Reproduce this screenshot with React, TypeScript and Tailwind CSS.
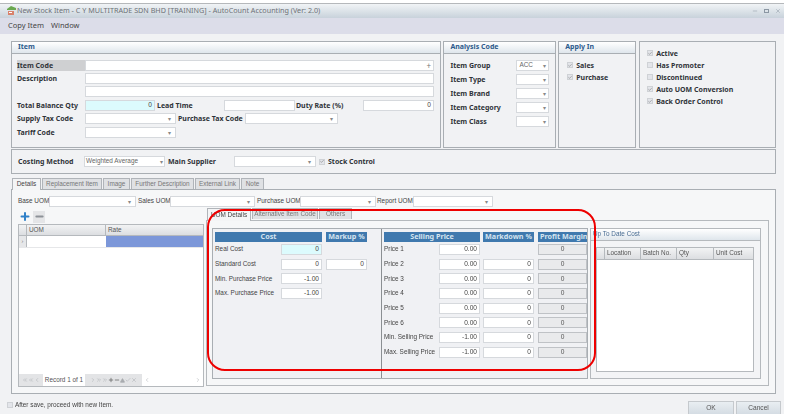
import { ChevronLeft, ChevronRight, ChevronsLeft, ChevronsRight, Check, X, Minus, Plus, Triangle } from 'lucide-react';

const font = { fontFamily: '"Noto Sans", "DejaVu Sans", sans-serif' };
const thin = { fontFamily: '"Liberation Sans", Arial, sans-serif' };

function Field({ w, value, arrow, tint }: { w: number; value?: string; arrow?: boolean; tint?: boolean }) {
  return (
    <div
      style={{ width: w, ...thin }}
      className={`h-[11px] shrink-0 flex items-center justify-end px-[2px] border border-[#d6d9dd] text-[6.6px] leading-none text-[#444] ${tint ? 'bg-[#dcfbfd]' : 'bg-white'}`}
    >
      {value && <span>{value}</span>}
      {arrow && <span className="text-[#888] text-[6px] pr-[2px]">▾</span>}
    </div>
  );
}

function Label({ children, w }: { children: string; w?: number }) {
  return (
    <div style={w ? { width: w } : undefined} className="shrink-0 text-[7px] leading-none font-bold text-[#2f3338] whitespace-nowrap">
      {children}
    </div>
  );
}

function Small({ children, w }: { children: string; w?: number }) {
  return (
    <div style={w ? { width: w, ...thin } : thin} className="shrink-0 text-[6.4px] leading-none text-[#444] whitespace-nowrap">
      {children}
    </div>
  );
}

function Check2({ on, label }: { on?: boolean; label: string }) {
  return (
    <div className="flex items-center gap-[3px] h-[12px]">
      <div className="w-[6px] h-[6px] bg-[#e3e5ea] border border-[#cfd2d6] flex items-center justify-center">
        {on && <Check size={5} strokeWidth={3} className="text-[#666]" />}
      </div>
      <Label>{label}</Label>
    </div>
  );
}

function PanelHead({ children }: { children: string }) {
  return (
    <div className="h-[12px] px-[6px] flex items-center border-b border-[#a9aeb3] bg-gradient-to-b from-white to-[#dfe6ec] text-[7px] font-bold text-[#2c5a8c]">
      {children}
    </div>
  );
}

function Blue({ w, children, left }: { w: number; children: string; left?: boolean }) {
  return (
    <div style={{ width: w }} className={`h-[10px] shrink-0 bg-[#4079ae] flex items-center text-[7.2px] leading-none font-bold text-[#d5e4f0] overflow-hidden whitespace-nowrap ${left ? 'pl-[2px]' : 'justify-center'}`}>
      {children}
    </div>
  );
}

function Tab({ w, label, active, h = 11 }: { w: number; label: string; active?: boolean; h?: number }) {
  return (
    <div
      style={{ width: w, height: h, ...thin }}
      className={`shrink-0 flex items-center justify-center border border-b-0 border-[#b0b4b9] text-[6.4px] leading-none whitespace-nowrap ${active ? 'bg-[#f4f5f6] text-[#444]' : 'bg-[#dfe1e4] text-[#777]'}`}
    >
      {label}
    </div>
  );
}

const analysis = ['Item Group', 'Item Type', 'Item Brand', 'Item Category', 'Item Class'];
const prices = [
  ['Price 1', '0.00'],
  ['Price 2', '0.00'],
  ['Price 3', '0.00'],
  ['Price 4', '0.00'],
  ['Price 5', '0.00'],
  ['Price 6', '0.00'],
  ['Min. Selling Price', '-1.00'],
  ['Max. Selling Price', '-1.00'],
];

export default function App() {
  return (
    <div style={font} className="relative w-[787px] h-[414px] overflow-hidden bg-white">
      <div className="w-[784px] h-[414px] flex flex-col bg-[#f1f2f4] blur-[0.3px]">
        <div className="h-[4px] shrink-0 bg-white border-b border-[#b5b8bb]" />
        <div className="h-[14px] shrink-0 flex items-center pl-[7px] pr-[3px] bg-gradient-to-b from-[#f1f4f6] to-[#c8d2db]">
          <svg width="9" height="10" viewBox="0 0 9 10" className="shrink-0">
            <path d="M0 3 L4 0 L9 2 L9 4 L0 4 Z" fill="#6aa84f" />
            <rect x="1" y="5" width="6" height="4" fill="#d9826b" />
            <rect x="2" y="6" width="3" height="1" fill="#fff" />
          </svg>
          <span className="ml-[1px] text-[7.2px] leading-none text-[#6d7176] whitespace-nowrap">
            New Stock Item - C Y MULTITRADE SDN BHD [TRAINING] - AutoCount Accounting (Ver: 2.0)
          </span>
          <div className="ml-auto flex items-center gap-[6px] text-[#8b97a3]">
            <Minus size={6} />
            <div className="w-[5px] h-[4px] border border-[#8b97a3]" />
            <X size={6} />
          </div>
        </div>
        <div className="h-[16px] shrink-0 flex items-center gap-[7px] pl-[8px] bg-[#dcdde9] text-[7.5px] leading-none text-[#444]">
          <span>Copy Item</span>
          <span>Window</span>
        </div>

        <div className="pl-[11px] pt-[7px] flex flex-col w-[776px]">
          <div className="flex h-[107px] gap-[2px]">
            <div className="w-[431px] border border-[#a9aeb3]">
              <PanelHead>Item</PanelHead>
              <div className="pl-[5px] pt-[6px] flex flex-col gap-[2px]">
                <div className="flex items-center">
                  <div className="w-[68px] h-[11px] flex items-center bg-[#cfd0d2]">
                    <Label>Item Code</Label>
                  </div>
                  <div className="w-[349px] h-[11px] flex items-center justify-end pr-[2px] bg-white border border-[#d6d9dd] text-[8px] text-[#777]">+</div>
                </div>
                <div className="flex items-center">
                  <Label w={68}>Description</Label>
                  <Field w={349} />
                </div>
                <div className="flex items-center pl-[68px]">
                  <Field w={349} />
                </div>
                <div className="flex items-center mt-[1px]">
                  <Label w={68}>Total Balance Qty</Label>
                  <Field w={70} value="0" tint />
                  <div className="pl-[2px] w-[69px]"><Label>Lead Time</Label></div>
                  <Field w={71} />
                  <div className="pl-[1px] w-[68px]"><Label>Duty Rate (%)</Label></div>
                  <Field w={71} value="0" />
                </div>
                <div className="flex items-center">
                  <Label w={68}>Supply Tax Code</Label>
                  <Field w={91} arrow />
                  <div className="pl-[2px] w-[69px]"><Label>Purchase Tax Code</Label></div>
                  <Field w={93} arrow />
                </div>
                <div className="flex items-center mt-[1px]">
                  <Label w={68}>Tariff Code</Label>
                  <Field w={91} arrow />
                </div>
              </div>
            </div>

            <div className="w-[113px] border border-[#a9aeb3]">
              <PanelHead>Analysis Code</PanelHead>
              <div className="pl-[6px] pt-[6px] flex flex-col gap-[3px]">
                {analysis.map((name, i) => (
                  <div key={name} className="flex items-center">
                    <Label w={66}>{name}</Label>
                    <div style={thin} className="w-[33px] h-[11px] flex items-center justify-between px-[2px] bg-white border border-[#d6d9dd] text-[6.4px] leading-none text-[#666]">
                      <span>{i === 0 ? 'ACC' : ''}</span>
                      <span className="text-[6px] text-[#888]">▾</span>
                    </div>
                  </div>
                ))}
              </div>
            </div>

            <div className="w-[78px] border border-[#a9aeb3]">
              <PanelHead>Apply In</PanelHead>
              <div className="pl-[8px] pt-[5px] flex flex-col">
                <Check2 on label="Sales" />
                <Check2 on label="Purchase" />
              </div>
            </div>

            <div className="w-[137px] ml-[1px] border border-[#a9aeb3] pl-[7px] pt-[5px] flex flex-col">
              <Check2 on label="Active" />
              <Check2 label="Has Promoter" />
              <Check2 label="Discontinued" />
              <Check2 on label="Auto UOM Conversion" />
              <Check2 on label="Back Order Control" />
            </div>
          </div>

          <div className="mt-[1px] h-[25px] w-[765px] flex items-center pl-[6px] border border-[#a9aeb3]">
            <Label w={66}>Costing Method</Label>
            <div style={thin} className="w-[81px] h-[11px] flex items-center justify-between px-[1px] bg-white border border-[#d6d9dd] text-[6.4px] leading-none text-[#666]">
              <span>Weighted Average</span>
              <span className="text-[6px] text-[#888]">▾</span>
            </div>
            <div className="pl-[3px] w-[69px]"><Label>Main Supplier</Label></div>
            <Field w={82} arrow />
            <div className="ml-[3px]"><Check2 on label="Stock Control" /></div>
          </div>

          <div className="mt-[4px] flex pl-[1px] h-[11px] gap-[1px] relative z-10">
            <Tab w={29} h={12} label="Details" active />
            <Tab w={60} label="Replacement Item" />
            <Tab w={27} label="Image" />
            <Tab w={63} label="Further Description" />
            <Tab w={45} label="External Link" />
            <Tab w={23} label="Note" />
          </div>

          <div className="h-[205px] w-[765px] flex flex-col bg-[#f6f7f8] border border-[#a9aeb3] pl-[6px] pt-[6px]">
            <div className="flex items-center h-[11px]">
              <Small w={31}>Base UOM</Small>
              <Field w={87} arrow />
              <div className="pl-[2px] w-[34px]"><Small>Sales UOM</Small></div>
              <Field w={85} arrow />
              <div className="pl-[2px] w-[45px]"><Small>Purchase UOM</Small></div>
              <Field w={76} arrow />
              <div className="pl-[1px] w-[37px]"><Small>Report UOM</Small></div>
              <Field w={80} arrow />
            </div>

            <div className="flex mt-[2px]">
              <div className="w-[186px] flex flex-col">
                <div className="flex items-center gap-[2px] h-[15px] pl-[1px]">
                  <div className="w-[12px] h-[12px] flex items-center justify-center">
                    <Plus size={13} strokeWidth={4} className="text-[#2f80c8]" />
                  </div>
                  <div className="w-[12px] h-[12px] flex items-center justify-center bg-[#e4e5e7]">
                    <Minus size={11} strokeWidth={4} className="text-[#8d9298]" />
                  </div>
                </div>
                <div className="h-[163px] flex flex-col bg-white border border-[#b5b9bd]">
                  <div style={thin} className="h-[11px] flex bg-gradient-to-b from-[#f2f3f4] to-[#dcdee1] border-b border-[#b5b9bd] text-[6.4px] leading-none text-[#555]">
                    <div className="w-[8px] border-r border-[#b5b9bd]" />
                    <div className="w-[79px] flex items-center pl-[2px] border-r border-[#b5b9bd]">UOM</div>
                    <div className="flex-1 flex items-center pl-[2px]">Rate</div>
                  </div>
                  <div className="h-[12px] flex border-b border-[#e6e7e9]">
                    <div className="w-[8px] flex items-center justify-center bg-[#e6e7e9] border-r border-[#b5b9bd] text-[6px] text-[#777]">›</div>
                    <div className="w-[79px]" />
                    <div className="flex-1 bg-[#7c97d9]" />
                  </div>
                  <div className="mt-auto h-[12px] flex items-center text-[#a9acb0]">
                    <div className="flex items-center h-full w-[24px] justify-center bg-[#e3e4e6]">
                      <ChevronsLeft size={6} />
                      <ChevronsLeft size={6} />
                      <ChevronLeft size={6} />
                    </div>
                    <span style={thin} className="w-[42px] text-center text-[6.4px] leading-none text-[#555] whitespace-nowrap">Record 1 of 1</span>
                    <div className="flex items-center h-full w-[57px] justify-center bg-[#e3e4e6]">
                      <ChevronRight size={6} />
                      <ChevronsRight size={6} />
                      <ChevronsRight size={6} />
                      <Plus size={6} strokeWidth={3} className="text-[#666]" />
                      <Minus size={6} strokeWidth={3} className="text-[#666]" />
                      <Triangle size={5} fill="currentColor" />
                      <Check size={6} />
                      <X size={6} />
                    </div>
                    <ChevronLeft size={6} className="ml-[2px]" />
                    <ChevronRight size={6} className="ml-auto mr-[2px]" />
                  </div>
                </div>
              </div>

              <div className="ml-[2px] -mt-[1px] flex flex-col w-[563px]">
                <div className="flex h-[12px] gap-[1px] relative z-10 pl-[1px]">
                  <Tab w={44} h={13} label="UOM Details" active />
                  <Tab w={66} label="Alternative Item Code" />
                  <Tab w={33} label="Others" />
                </div>
                <div className="h-[166px] flex gap-[2px] border border-[#b5b9bd] pl-[5px] pt-[7px] bg-[#f6f7f8]">
                  <div className="w-[376px] h-[151px] flex border border-[#a9aeb3] bg-[#f0f1f4]">
                    <div className="w-[169px] border-r border-[#8b8f93] pl-[2px] pt-[3px]">
                      <div className="flex gap-[4px]">
                        <Blue w={107}>Cost</Blue>
                        <Blue w={41}>Markup %</Blue>
                      </div>
                      <div className="grid grid-cols-[66px_41px_41px] gap-x-0 gap-y-[3.7px] mt-[2px] items-center">
                        <Small>Real Cost</Small>
                        <Field w={41} value="0" tint />
                        <div />
                        <Small>Standard Cost</Small>
                        <Field w={41} value="0" />
                        <div className="ml-[4px]"><Field w={41} value="0" /></div>
                        <Small>Min. Purchase Price</Small>
                        <Field w={41} value="-1.00" />
                        <div />
                        <Small>Max. Purchase Price</Small>
                        <Field w={41} value="-1.00" />
                        <div />
                      </div>
                    </div>
                    <div className="flex-1 pl-[2px] pt-[3px]">
                      <div className="flex">
                        <Blue w={96}>Selling Price</Blue>
                        <div className="ml-[3px]"><Blue w={51}>Markdown %</Blue></div>
                        <div className="ml-[4px]"><Blue w={49} left>Profit Margin %</Blue></div>
                      </div>
                      <div className="flex flex-col gap-[3.7px] mt-[2px]">
                        {prices.map(([name, value], i) => (
                          <div key={name} className="flex items-center">
                            <Small w={55}>{name}</Small>
                            <Field w={41} value={value} />
                            <div className="ml-[3px] w-[51px]">
                              {i > 0 && <Field w={51} value="0" />}
                            </div>
                            <div style={thin} className="ml-[4px] w-[49px] h-[11px] flex items-center justify-center bg-[#e9eaec] border border-[#bfc2c6] text-[6.6px] leading-none text-[#555]">0</div>
                          </div>
                        ))}
                      </div>
                    </div>
                  </div>

                  <div className="w-[171px] h-[151px] border border-[#b5b9bd] bg-[#f3f4f6]">
                    <div style={thin} className="h-[12px] flex items-center pl-[2px] border-b border-[#b5b9bd] bg-gradient-to-b from-white to-[#dfe6ec] text-[6.4px] leading-none text-[#4a6d93]">
                      Up To Date Cost
                    </div>
                    <div className="mt-[6px] ml-[5px] w-[158px] h-[125px] bg-white border border-[#b5b9bd]">
                      <div style={thin} className="h-[12px] flex bg-gradient-to-b from-[#f2f3f4] to-[#dcdee1] border-b border-[#b5b9bd] text-[6.4px] leading-none text-[#555]">
                        <div className="w-[8px] border-r border-[#b5b9bd]" />
                        <div className="w-[36px] flex items-center pl-[2px] border-r border-[#b5b9bd]">Location</div>
                        <div className="w-[36px] flex items-center pl-[2px] border-r border-[#b5b9bd]">Batch No.</div>
                        <div className="w-[37px] flex items-center pl-[2px] border-r border-[#b5b9bd]">Qty</div>
                        <div className="flex-1 flex items-center pl-[2px]">Unit Cost</div>
                      </div>
                    </div>
                  </div>
                </div>
              </div>
            </div>
          </div>
        </div>

        <div className="flex-1 flex pl-[7px] pr-[3px]">
          <div className="mt-[7px] flex items-center gap-[2px] h-[8px]">
            <div className="w-[6px] h-[6px] bg-[#e3e5ea] border border-[#cfd2d6]" />
            <Small>After save, proceed with new Item.</Small>
          </div>
          <div style={thin} className="ml-auto mt-[7px] flex gap-[2px]">
            <div className="w-[46px] h-[15px] flex items-center justify-center border border-[#c5c9cd] bg-gradient-to-b from-[#e9eef2] to-[#d3dbe2] text-[6.6px] leading-none text-[#555]">OK</div>
            <div className="w-[45px] h-[15px] flex items-center justify-center border border-[#c5c9cd] bg-gradient-to-b from-[#e9eef2] to-[#d3dbe2] text-[6.6px] leading-none text-[#555]">Cancel</div>
          </div>
        </div>
      </div>

      <div className="absolute left-[207px] top-[209px] w-[389px] h-[162px] rounded-[18px] border-[2px] border-[#ee0000] pointer-events-none" />
    </div>
  );
}
